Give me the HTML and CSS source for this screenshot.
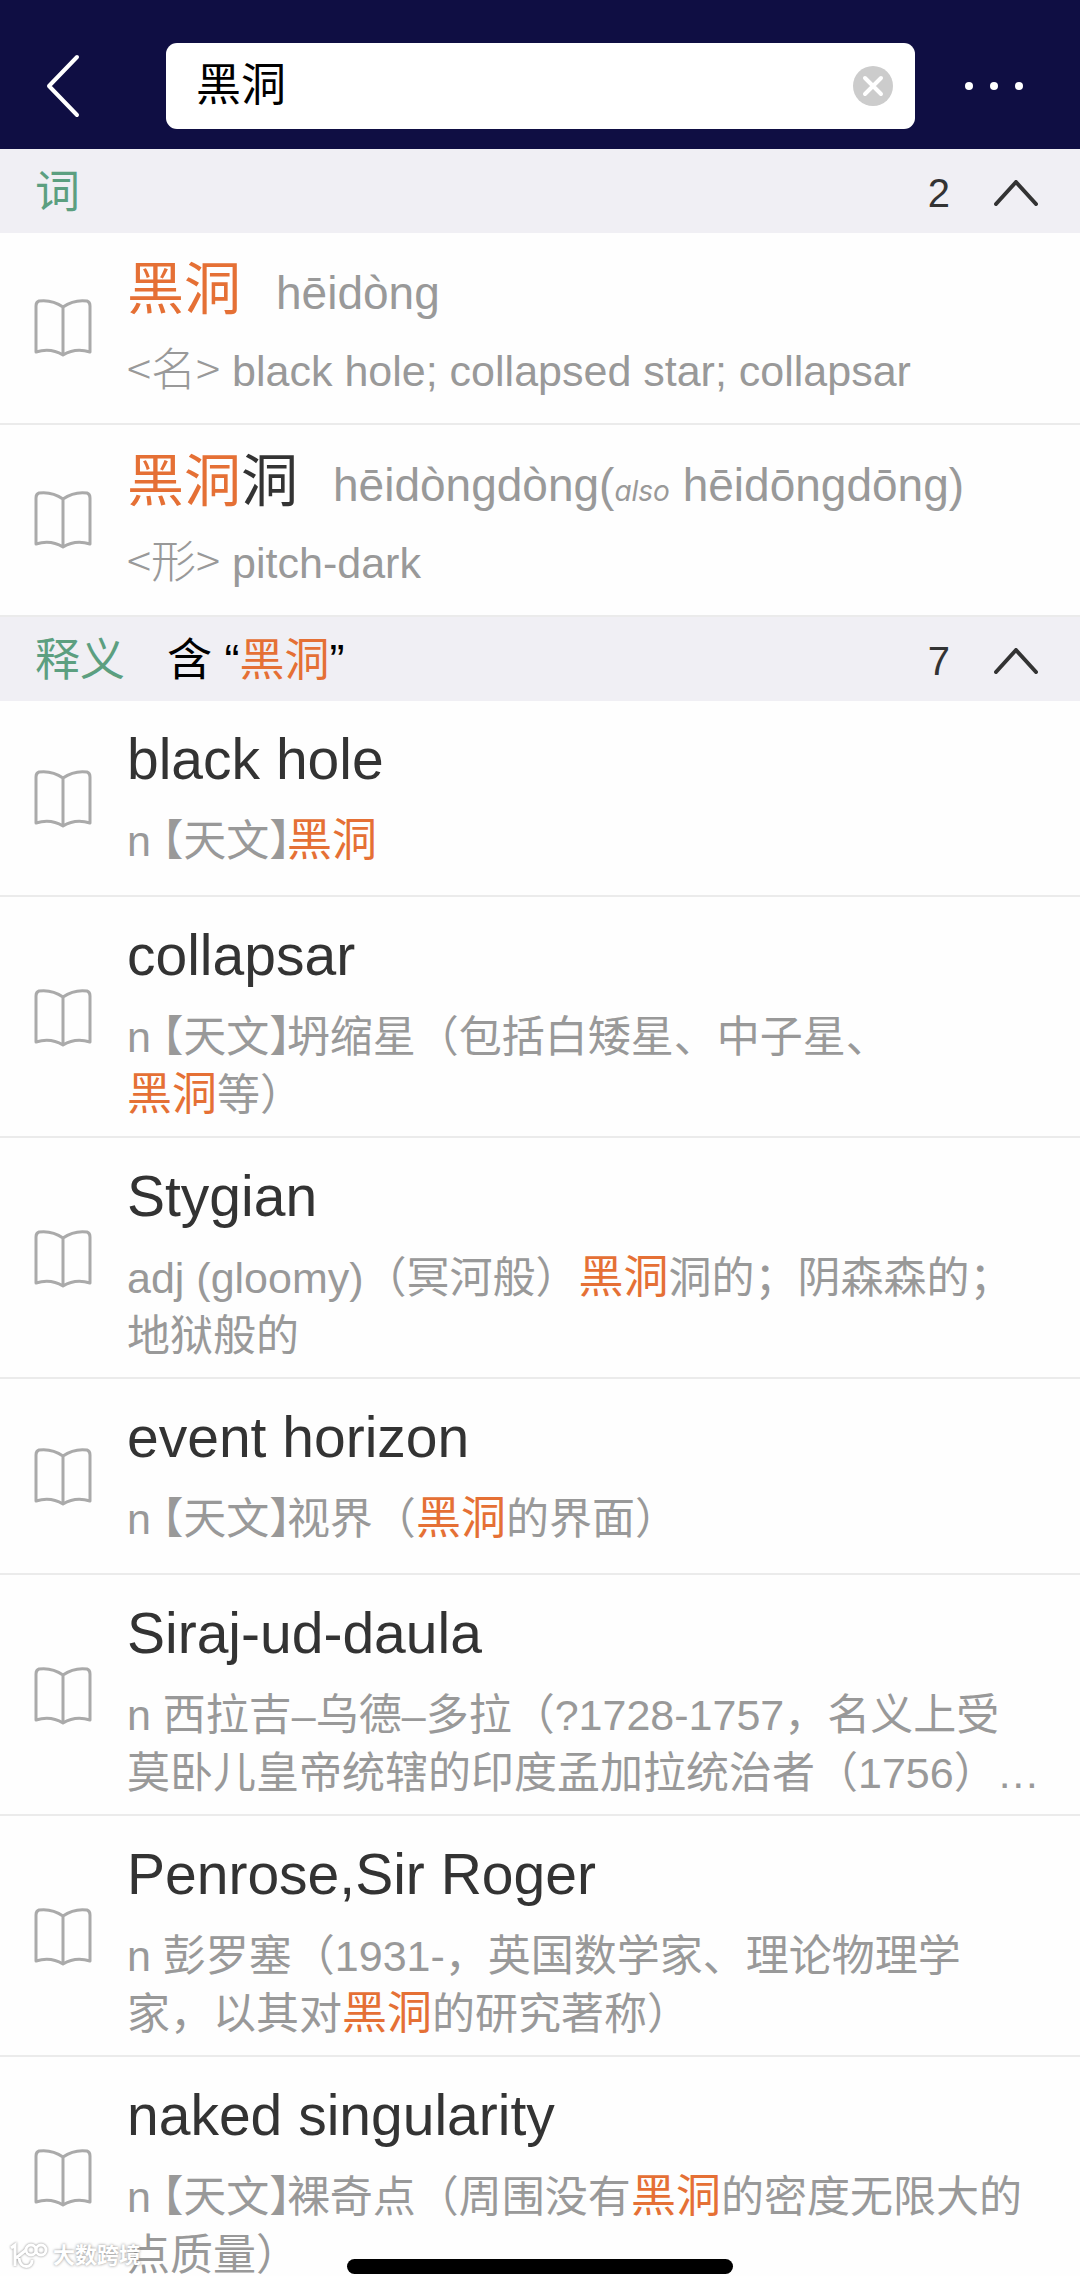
FILE: index.html
```html
<!DOCTYPE html>
<html lang="zh-CN">
<head>
<meta charset="utf-8">
<meta name="viewport" content="width=device-width, initial-scale=1">
<title>黑洞</title>
<link rel="stylesheet" href="styles.css">
</head>
<body>
<svg class="sprite" aria-hidden="true">
  <symbol id="book" viewBox="0 0 58 58">
    <path d="M29 8C22 3 13 1 5 2Q2 3 2 7V53C11 50 21 51 29 56C37 51 47 50 56 53V7Q56 3 53 2C45 1 36 3 29 8ZM29 8V56"/>
  </symbol>
  <symbol id="up" viewBox="0 0 44 26">
    <path d="M2 24L22 2L42 24"/>
  </symbol>
</svg>
<div class="app">
  <header class="topbar">
    <button class="icon-button back" aria-label="返回">
      <svg width="34" height="64" viewBox="0 0 34 64"><path d="M31 3L3 32L31 61"/></svg>
    </button>
    <form class="search">
      <input class="search-input" type="text" value="黑洞" aria-label="搜索">
      <button class="icon-button clear" type="reset" aria-label="清除">
        <svg width="42" height="42" viewBox="0 0 42 42"><circle cx="21" cy="21" r="20"/><path d="M13 13L29 29M29 13L13 29"/></svg>
      </button>
    </form>
    <button class="icon-button more" aria-label="更多">
      <svg width="60" height="12" viewBox="0 0 60 12"><circle cx="5" cy="6" r="4"/><circle cx="30" cy="6" r="4"/><circle cx="55" cy="6" r="4"/></svg>
    </button>
  </header>
  <main class="results">
    <section>
      <div class="section-head">
        <h2 class="section-title">词</h2>
        <span class="count">2</span>
        <button class="icon-button toggle" aria-label="收起"><svg><use href="#up"/></svg></button>
      </div>
      <ul class="list words">
        <li class="row">
          <svg class="book"><use href="#book"/></svg>
          <div class="entry">
            <h3 class="headword"><mark>黑洞</mark><span class="pinyin">hēidòng</span></h3>
            <p class="definition"><span class="pos">&lt;名&gt;</span> black hole; collapsed star; collapsar</p>
          </div>
        </li>
        <li class="row">
          <svg class="book"><use href="#book"/></svg>
          <div class="entry">
            <h3 class="headword"><mark>黑洞</mark>洞<span class="pinyin">hēidòngdòng(<i>also</i> hēidōngdōng)</span></h3>
            <p class="definition"><span class="pos">&lt;形&gt;</span> pitch-dark</p>
          </div>
        </li>
      </ul>
    </section>
    <section>
      <div class="section-head">
        <h2 class="section-title">释义</h2>
        <span class="query">含 “<mark>黑洞</mark>”</span>
        <span class="count">7</span>
        <button class="icon-button toggle" aria-label="收起"><svg><use href="#up"/></svg></button>
      </div>
      <ul class="list">
        <li class="row">
          <svg class="book"><use href="#book"/></svg>
          <div class="entry">
            <h3 class="headword">black hole</h3>
            <p class="definition">n <span class="field">【天文】</span><mark>黑洞</mark></p>
          </div>
        </li>
        <li class="row">
          <svg class="book"><use href="#book"/></svg>
          <div class="entry">
            <h3 class="headword">collapsar</h3>
            <p class="definition">n <span class="field">【天文】</span>坍缩星（包括白矮星、中子星、<br><mark>黑洞</mark>等）</p>
          </div>
        </li>
        <li class="row">
          <svg class="book"><use href="#book"/></svg>
          <div class="entry">
            <h3 class="headword">Stygian</h3>
            <p class="definition">adj (gloomy)（冥河般）<mark>黑洞</mark>洞的；阴森森的；<br>地狱般的</p>
          </div>
        </li>
        <li class="row">
          <svg class="book"><use href="#book"/></svg>
          <div class="entry">
            <h3 class="headword">event horizon</h3>
            <p class="definition">n <span class="field">【天文】</span>视界（<mark>黑洞</mark>的界面）</p>
          </div>
        </li>
        <li class="row">
          <svg class="book"><use href="#book"/></svg>
          <div class="entry">
            <h3 class="headword">Siraj-ud-daula</h3>
            <p class="definition">n 西拉吉–乌德–多拉（?1728-1757，名义上受<br>莫卧儿皇帝统辖的印度孟加拉统治者（1756）…</p>
          </div>
        </li>
        <li class="row">
          <svg class="book"><use href="#book"/></svg>
          <div class="entry">
            <h3 class="headword">Penrose,Sir Roger</h3>
            <p class="definition">n 彭罗塞（1931-，英国数学家、理论物理学<br>家，以其对<mark>黑洞</mark>的研究著称）</p>
          </div>
        </li>
        <li class="row">
          <svg class="book"><use href="#book"/></svg>
          <div class="entry">
            <h3 class="headword">naked singularity</h3>
            <p class="definition">n <span class="field">【天文】</span>裸奇点（周围没有<mark>黑洞</mark>的密度无限大的<br>点质量）</p>
          </div>
        </li>
      </ul>
    </section>
  </main>
  <div class="watermark">
    <svg width="40" height="28" viewBox="0 0 40 28"><path d="M2 6L6 3V24M17 8L7 16M10 16C11 28 24 26 23 18"/><circle cx="22" cy="8" r="5"/><circle cx="32" cy="8" r="5"/></svg>
    <span>大数跨境</span>
  </div>
  <div class="home-indicator"></div>
</div>
</body>
</html>
```
FILE: styles.css
```css
* {
  box-sizing: border-box;
}

body {
  margin: 0;
  background: #fefefe;
  color: #333;
  font-family: "Liberation Sans", "Noto Sans CJK SC", sans-serif;
  text-spacing-trim: space-all;
}

h2,
h3,
p,
ul {
  margin: 0;
  padding: 0;
  font-weight: 400;
  list-style: none;
}

mark {
  background: none;
  color: #e57035;
}

.sprite {
  display: none;
}

.app {
  position: relative;
  display: flex;
  flex-direction: column;
  height: 100vh;
  overflow: hidden;
}

.icon-button {
  display: flex;
  align-items: center;
  justify-content: center;
  padding: 0;
  border: 0;
  background: none;
}

.icon-button svg {
  fill: none;
  stroke-linecap: round;
  stroke-linejoin: round;
}

/* Top bar */

.topbar {
  display: flex;
  flex: none;
  align-items: center;
  padding: 43px 0 20px;
  background: #0f0e43;
}

.back {
  width: 166px;
  padding-right: 40px;
}

.back svg {
  stroke: #fff;
  stroke-width: 4;
}

.search {
  display: flex;
  flex: 1;
  align-items: center;
  height: 86px;
  padding: 0 21px 0 30px;
  border-radius: 11px;
  background: #fff;
}

.search-input {
  flex: 1;
  min-width: 0;
  height: 66px;
  padding: 0;
  border: 0;
  outline: 0;
  background: none;
  color: #000;
  font: 45px/66px "Liberation Sans", "Noto Sans CJK SC", sans-serif;
}

.clear circle {
  fill: #ccc;
}

.clear path {
  stroke: #fff;
  stroke-width: 4;
}

.more {
  width: 165px;
  padding-right: 8px;
}

.more circle {
  fill: #fff;
}

/* Results */

.results {
  flex: 1;
  min-height: 0;
  overflow-y: auto;
  scrollbar-width: none;
}

.section-head {
  display: flex;
  align-items: center;
  height: 84px;
  padding: 4px 42px 0 35px;
  background: #f0eff4;
  font-size: 45px;
  line-height: 66px;
}

.section-title {
  color: #5c9f80;
  font-size: 45px;
}

.query {
  margin-left: 42px;
  color: #000;
}

.count {
  margin-left: auto;
  font-size: 40px;
}

.toggle {
  margin-left: 44px;
}

.toggle svg {
  width: 44px;
  height: 26px;
  stroke: #333;
  stroke-width: 4;
}

.row {
  display: flex;
  align-items: center;
  min-height: 196px;
  padding: 2px 30px 0 34px;
  border-bottom: 2px solid #ebebeb;
}

.words .row {
  min-height: 192px;
  padding-top: 0;
}

.book {
  flex: none;
  width: 58px;
  height: 58px;
  fill: none;
  stroke: #aaa;
  stroke-width: 3;
  stroke-linejoin: round;
}

.entry {
  flex: 1;
  align-self: flex-start;
  min-width: 0;
  margin-left: 35px;
  padding: 23px 0 12px;
}

.headword {
  font-size: 57px;
  line-height: 66px;
  white-space: nowrap;
}

.pinyin {
  margin-left: 35px;
  color: #999;
  font-size: 46px;
  line-height: 1;
}

.pinyin i {
  font-family: Inter, sans-serif;
  font-size: 28px;
}

.definition {
  margin-top: 20px;
  color: #999;
  font-size: 43px;
  line-height: 58px;
  white-space: nowrap;
}

.definition mark {
  font-size: 45px;
  line-height: 1;
}

.pos {
  font-family: "Noto Sans CJK SC", sans-serif;
  font-size: 45px;
  font-weight: 300;
  line-height: 1;
}

.field {
  margin: 0 -4px 0 -1px;
  font-feature-settings: "halt";
}

/* Overlays */

.watermark {
  position: absolute;
  bottom: 6px;
  left: 9px;
  display: flex;
  align-items: center;
  gap: 4px;
  color: #fff;
  font-size: 22px;
  line-height: 28px;
  font-weight: 700;
  text-shadow: 0 0 3px #888;
}

.watermark svg {
  fill: none;
  stroke: #fff;
  stroke-width: 3;
  filter: drop-shadow(0 0 1px #888);
}

.home-indicator {
  position: absolute;
  bottom: 2px;
  left: 50%;
  width: 386px;
  height: 15px;
  margin-left: -193px;
  border-radius: 8px;
  background: #000;
}
```
